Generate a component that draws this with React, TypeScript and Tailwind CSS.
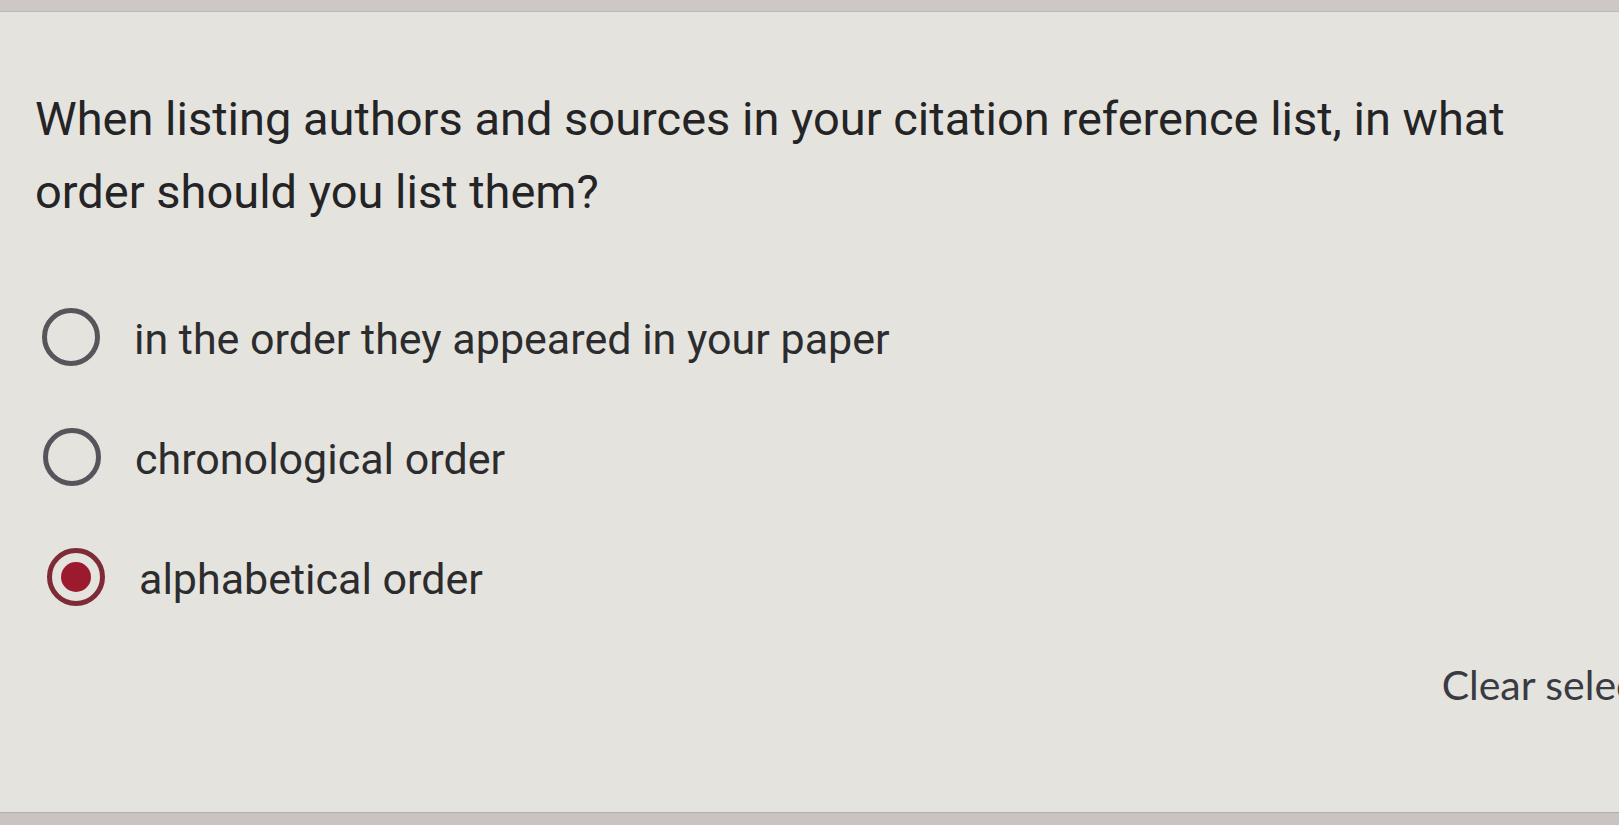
import React from 'react'

const OPTIONS = [
  { label: 'in the order they appeared in your paper', shift: 'ml-0', selected: false },
  { label: 'chronological order', shift: 'ml-[1px]', selected: false },
  { label: 'alphabetical order', shift: 'ml-[5px]', selected: true },
]

function Radio({ selected }: { selected: boolean }) {
  return (
    <div
      className={`w-[58px] h-[58px] shrink-0 rounded-full border-[5px] flex items-center justify-center ${
        selected ? 'border-[#7e2a37]' : 'border-[#55555a]'
      }`}
    >
      {selected && <div className="w-[30px] h-[30px] rounded-full bg-[#9c1a2e]" />}
    </div>
  )
}

export default function App() {
  return (
    <div className="w-[1619px] h-[825px] overflow-hidden flex flex-col bg-[#e3e2dc]">
      <div className="h-[12px] bg-[#cdc7c5] border-b border-[#bdb8b4]" />

      <div className="flex-1 flex flex-col pt-[70px] bg-[#e4e3dd]" style={{ fontFamily: 'Roboto, "Noto Sans", sans-serif' }}>
        {/* Question */}
        <div className="pl-[35px] pr-[90px] text-[47px] leading-[73px] text-[#242426]">
          When listing authors and sources in your citation reference list, in what order should you list them?
        </div>

        {/* Options */}
        <div className="mt-[69px] flex flex-col gap-[40px] pl-[42px]">
          {OPTIONS.map((o) => (
            <div key={o.label} className={`h-[80px] flex items-center gap-[34px] ${o.shift}`}>
              <Radio selected={o.selected} />
              <span className="text-[43px] text-[#2c2c2f] leading-none pt-[4px]">{o.label}</span>
            </div>
          ))}
        </div>

        {/* Clear selection */}
        <div className="mt-[44px] flex justify-end mr-[-88px]">
          <span
            className="text-[41px] leading-[48px] text-[#3a3a42] whitespace-nowrap"
            style={{ fontFamily: 'Lato, "Open Sans", sans-serif' }}
          >
            Clear selection
          </span>
        </div>
      </div>

      <div className="h-[13px] bg-[#c9c4c1] border-t border-[#b3aeab]" />
    </div>
  )
}
